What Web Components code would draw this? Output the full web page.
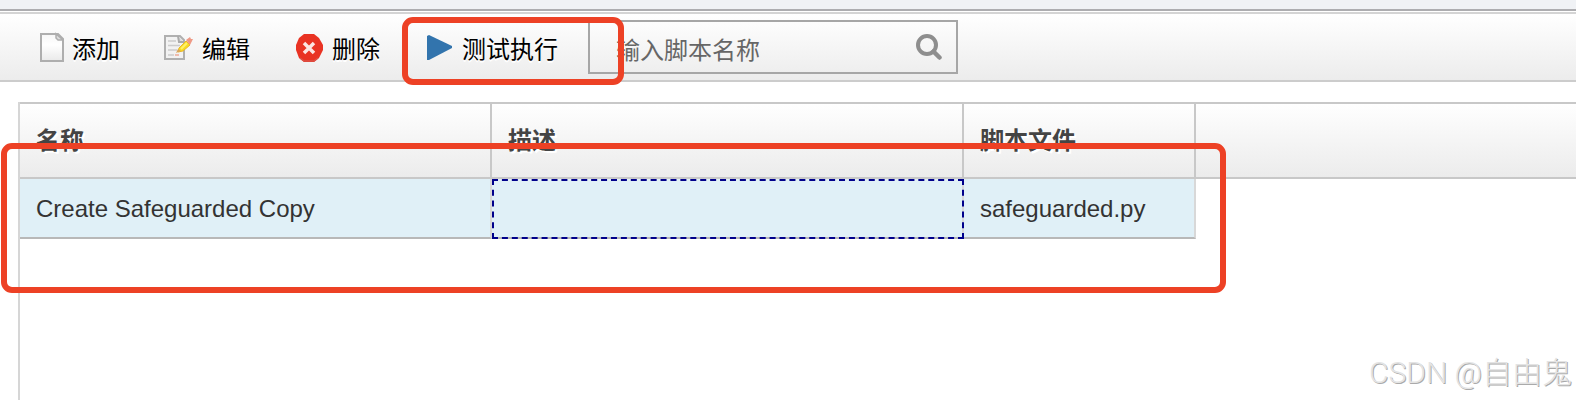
<!DOCTYPE html>
<html lang="zh-CN">
<head>
<meta charset="utf-8">
<title>脚本</title>
<style>
  body {
    margin: 0;
    font-family: "Liberation Sans", "Noto Sans CJK SC", sans-serif;
    font-size: 24px;
    color: #333;
    background: white;
  }
</style>
</head>
<body>
<script-page></script-page>

<script>
const icons = {
  add: `
    <defs><linearGradient id="paper" x1="0" y1="0" x2="0" y2="1">
      <stop offset="0" stop-color="#f6f6f6"/><stop offset=".4" stop-color="#fff"/><stop offset="1" stop-color="#e9e9e9"/>
    </linearGradient></defs>
    <path d="M9 3h17l5 5v22H9z" fill="url(#paper)" stroke="#aeaeae" stroke-width="2"/>
    <path d="M24 3v4l2 2h5z" fill="#ddd" stroke="#aeaeae" stroke-width="1.500"/>`,
  edit: `
    <path d="M3 5h15l4 4v19H3z" fill="#f2f2f2" stroke="#b0b0b0" stroke-width="2"/>
    <path d="M16 5l1 6h5" fill="#ddd" stroke="#aaa" stroke-width="2"/>
    <path d="M6 10h8M6 14.500h12M6 19h9M6 24h6" stroke="#ccc" stroke-width="1.500"/>
    <path d="M13 24h4" stroke="#eebcae" stroke-width="2"/>
    <path d="M17 17l7-7 4 4-7 6-5 1z" fill="#f8dc20" stroke="#e9b52c" stroke-width="1"/>
    <path d="M19 18l6-6" stroke="#fff16b" stroke-width="2"/>
    <path d="M24 9l4-3 1 2 2 0-3 6z" fill="#ee9a86"/>
    <path d="M16 18l-2 4 5-2z" fill="#d9a55c"/>`,
  remove: `
    <path d="M12 3h10l5 4 4 7v5l-4 8-5 4H12l-5-4-3-8v-5l3-7z" fill="#e93323"/>
    <path d="M8 27l4 3h10l4-3" fill="none" stroke="#dc5147" stroke-width="1.500"/>
    <path d="M12 12l10 10M22 12L12 22" stroke="#fce5e2" stroke-width="3.500"/>`,
  run: `<path d="M5 5l2-1 23 11v2L7 29H5z" fill="#3274ad"/>`,
  search: `
    <circle cx="11" cy="11" r="9" fill="none" stroke="#8e8e8e" stroke-width="4"/>
    <path d="M17.500 17.500l6 6" stroke="#8e8e8e" stroke-width="4.500" stroke-linecap="round"/>`
};

class ToolButton extends HTMLElement {
  constructor() {
    super();
    this.attachShadow({ mode: 'open' });
    this.shadowRoot.innerHTML = `
      <style>
        :host {
          display: block;
          flex: none;
        }
        button {
          display: flex;
          align-items: center;
          gap: 8px;
          padding: 0 20px;
          height: 64px;
          border: 0;
          background: none;
          font: inherit;
          color: black;
          white-space: nowrap;
          text-shadow: 0 2px white;
        }
        svg {
          width: 32px;
          height: 32px;
        }
      </style>
      <button type="button">
        <svg viewBox="0 0 32 32" aria-hidden="true">${icons[this.getAttribute('icon')]}</svg>
        <slot></slot>
      </button>
    `;
  }
}

class SearchField extends HTMLElement {
  constructor() {
    super();
    this.attachShadow({ mode: 'open' });
    this.shadowRoot.innerHTML = `
      <style>
        :host {
          display: flex;
          align-items: center;
          box-sizing: border-box;
          flex: 0 1 370px;
          min-width: 0;
          height: 54px;
          padding: 0 14px 0 26px;
          border: 2px solid #a6a6a6;
        }
        input {
          flex: 1;
          min-width: 0;
          height: 40px;
          padding: 8px 0 0;
          border: 0;
          outline: 0;
          background: none;
          font: inherit;
          line-height: 40px;
          color: #333;
        }
        input::placeholder {
          color: #666;
          opacity: 1;
        }
        button {
          display: flex;
          padding: 0;
          border: 0;
          background: none;
        }
        svg {
          width: 26px;
          height: 26px;
        }
      </style>
      <input type="text" aria-label="脚本名称" placeholder="输入脚本名称">
      <button type="button" aria-label="搜索">
        <svg viewBox="0 0 26 26" aria-hidden="true">${icons.search}</svg>
      </button>
    `;
  }
}

class ToolBar extends HTMLElement {
  constructor() {
    super();
    this.attachShadow({ mode: 'open' });
    this.shadowRoot.innerHTML = `
      <style>
        :host {
          display: flex;
          align-items: center;
          gap: 2px;
          height: 66px;
          padding: 0 12px;
          border-top: 2px solid #d4d4d4;
          border-bottom: 2px solid #ccc;
          background: linear-gradient(#fff, #ececec);
        }
        ::slotted(search-field) {
          margin-left: 8px;
        }
      </style>
      <slot></slot>
    `;
  }
}

class ScriptTable extends HTMLElement {
  constructor() {
    super();
    this.attachShadow({ mode: 'open' });
    this.shadowRoot.innerHTML = `
      <style>
        :host {
          display: block;
          flex: 1;
          margin: 20px 0 0 18px;
          border-left: 2px solid #d6d6d6;
        }
        table {
          width: 100%;
          table-layout: fixed;
          border-collapse: separate;
          border-spacing: 0;
        }
        .wide {
          width: 472px;
        }
        .file {
          width: 232px;
        }
        th, td {
          box-sizing: border-box;
          text-align: left;
          white-space: nowrap;
        }
        thead tr {
          background: linear-gradient(#fff, #ebebeb);
        }
        th {
          height: 77px;
          padding: 0 16px 4px;
          border: solid #c8c8c8;
          border-width: 2px 2px 2px 0;
          color: #444;
          text-shadow: 2px 2px white;
        }
        th.rest {
          border-right: 0;
        }
        td {
          height: 60px;
          padding: 2px 16px 0;
          border-right: 2px solid #d8d8d8;
          border-bottom: 2px solid #b8b8b8;
          background: #e0f0f7;
        }
        td.rest {
          border: 0;
          background: none;
        }
        td.focus {
          outline: 2px dashed #00008b;
          outline-offset: -2px;
        }
      </style>
      <table>
        <colgroup><col class="wide"><col class="wide"><col class="file"><col></colgroup>
        <thead>
          <tr><th>名称</th><th>描述</th><th>脚本文件</th><th class="rest"></th></tr>
        </thead>
        <tbody>
          <tr><td>Create Safeguarded Copy</td><td class="focus" tabindex="0"></td><td>safeguarded.py</td><td class="rest"></td></tr>
        </tbody>
      </table>
    `;
  }
}

// Red frame drawn over the page
class MarkBox extends HTMLElement {
  constructor() {
    super();
    this.attachShadow({ mode: 'open' });
    this.shadowRoot.innerHTML = `
      <style>
        :host {
          position: absolute;
          box-sizing: border-box;
          border: 6px solid #ed4125;
          border-radius: 11px;
          pointer-events: none;
        }
      </style>
    `;
  }
}

class ScriptPage extends HTMLElement {
  constructor() {
    super();
    this.attachShadow({ mode: 'open' });
    this.shadowRoot.innerHTML = `
      <style>
        :host {
          position: relative;
          display: flex;
          flex-direction: column;
          min-height: 100vh;
          overflow: hidden;
        }
        header {
          height: 9px;
          margin-bottom: 1px;
          border-bottom: 2px solid #adadb0;
          background: #f0f2f5;
        }
        .mark-run {
          left: 402px;
          top: 17px;
          width: 222px;
          height: 68px;
        }
        .mark-row {
          left: 1px;
          top: 143px;
          width: 1225px;
          height: 150px;
        }
        .watermark {
          position: absolute;
          right: 4px;
          bottom: 8px;
          font-family: Roboto, "Noto Sans CJK SC", sans-serif;
          font-size: 30px;
          font-weight: 300;
          color: #e4e4e4;
          text-shadow: 1px 1px #aaa;
        }
      </style>
      <header></header>
      <tool-bar>
        <tool-button icon="add">添加</tool-button>
        <tool-button icon="edit">编辑</tool-button>
        <tool-button icon="remove">删除</tool-button>
        <tool-button icon="run">测试执行</tool-button>
        <search-field></search-field>
      </tool-bar>
      <script-table></script-table>
      <mark-box class="mark-run"></mark-box>
      <mark-box class="mark-row"></mark-box>
      <span class="watermark">CSDN @自由鬼</span>
    `;
  }
}

customElements.define('tool-button', ToolButton);
customElements.define('search-field', SearchField);
customElements.define('tool-bar', ToolBar);
customElements.define('script-table', ScriptTable);
customElements.define('mark-box', MarkBox);
customElements.define('script-page', ScriptPage);
</script>
</body>
</html>
